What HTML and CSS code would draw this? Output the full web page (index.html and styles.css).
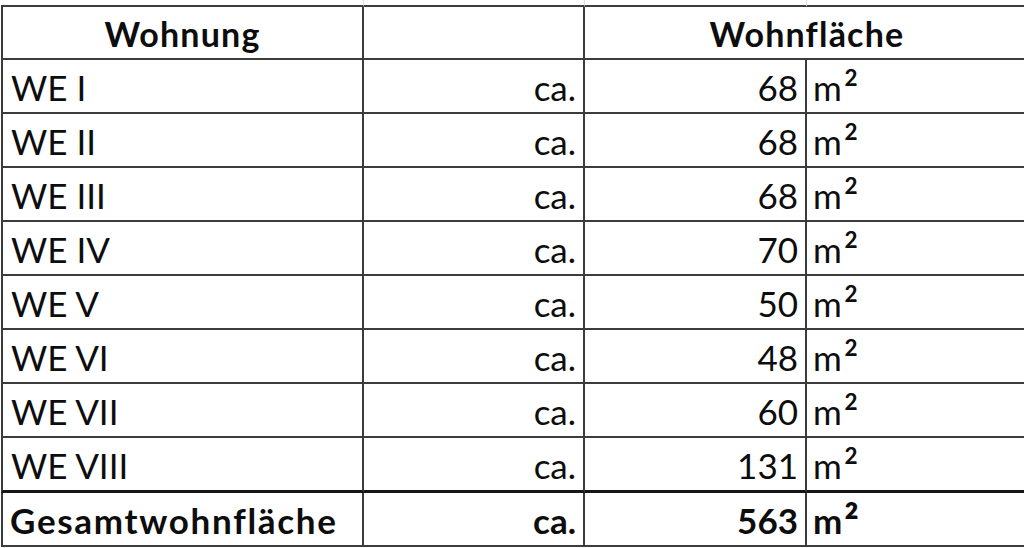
FILE: index.html
```html
<!DOCTYPE html>
<html lang="de">
<head>
<meta charset="utf-8">
<title>Wohnfläche</title>
<link rel="stylesheet" href="styles.css">
</head>
<body>
<table class="sheet">
  <colgroup>
    <col class="c1"><col class="c2"><col class="c3"><col class="c4">
  </colgroup>
  <tr class="ghost"><td></td><td></td><td></td><td></td></tr>
  <tr class="head">
    <td class="first center">Wohnung</td>
    <td></td>
    <td class="center" colspan="2">Wohnfläche</td>
  </tr>
  <tr class="row"><td class="first">WE I</td><td class="right">ca.</td><td class="right">68</td><td class="unit">m<span class="sq">²</span></td></tr>
  <tr class="row"><td class="first">WE II</td><td class="right">ca.</td><td class="right">68</td><td class="unit">m<span class="sq">²</span></td></tr>
  <tr class="row"><td class="first">WE III</td><td class="right">ca.</td><td class="right">68</td><td class="unit">m<span class="sq">²</span></td></tr>
  <tr class="row"><td class="first">WE IV</td><td class="right">ca.</td><td class="right">70</td><td class="unit">m<span class="sq">²</span></td></tr>
  <tr class="row"><td class="first">WE V</td><td class="right">ca.</td><td class="right">50</td><td class="unit">m<span class="sq">²</span></td></tr>
  <tr class="row"><td class="first">WE VI</td><td class="right">ca.</td><td class="right">48</td><td class="unit">m<span class="sq">²</span></td></tr>
  <tr class="row"><td class="first">WE VII</td><td class="right">ca.</td><td class="right">60</td><td class="unit">m<span class="sq">²</span></td></tr>
  <tr class="row last"><td class="first">WE VIII</td><td class="right">ca.</td><td class="right">131</td><td class="unit">m<span class="sq">²</span></td></tr>
  <tr class="row total"><td class="first">Gesamtwohnfläche</td><td class="right">ca.</td><td class="right">563</td><td class="unit">m<span class="sq">²</span></td></tr>
</table>
</body>
</html>
```

FILE: styles.css
```css
html, body {
  margin: 0;
  padding: 0;
  background: #ffffff;
  overflow: hidden;
  width: 1024px;
  height: 548px;
}

.sheet {
  border-collapse: separate;
  border-spacing: 0;
  table-layout: fixed;
  width: 1028px;
  margin: 0 0 0 1px;
  font-family: "Lato", "Liberation Sans", sans-serif;
  color: #0d0d0d;
}

.c1 { width: 363px; }
.c2 { width: 221px; }
.c3 { width: 222px; }
.c4 { width: 222px; }

.sheet td {
  box-sizing: border-box;
  padding: 0;
  border-right: 2px solid #3c3c3c;
  border-bottom: 2px solid #3c3c3c;
  vertical-align: bottom;
  white-space: nowrap;
}

.sheet tr.ghost td {
  border-right: 1px solid #dcdcdc;
  border-bottom: 2px solid #3c3c3c;
}
.ghost { height: 7px; }

.sheet td.first {
  border-left: 2px solid #3c3c3c;
}

.head { height: 53px; }
.head td {
  font-size: 34px;
  line-height: 34px;
  font-weight: 700;
  letter-spacing: 1.2px;
  padding-bottom: 7px;
}
.head td:last-child { border-right: none; }

.row { height: 54px; }
.row td {
  font-size: 35px;
  line-height: 35px;
  padding-bottom: 7px;
}
.row td.first { padding-left: 8px; }

.row.last { height: 55px; }
.row.last td { border-bottom: 3px solid #161616; }

.row.total td {
  font-weight: 700;
}
.row.total td.first {
  letter-spacing: 1.7px;
  padding-left: 7px;
}

.sq {
  font-size: 1.25em;
  line-height: 0;
  margin-left: 2px;
  vertical-align: -5px;
}

.center { text-align: center; }
.right { text-align: right; padding-right: 7px !important; }
.unit { padding-left: 6px !important; border-right: none !important; }
```
